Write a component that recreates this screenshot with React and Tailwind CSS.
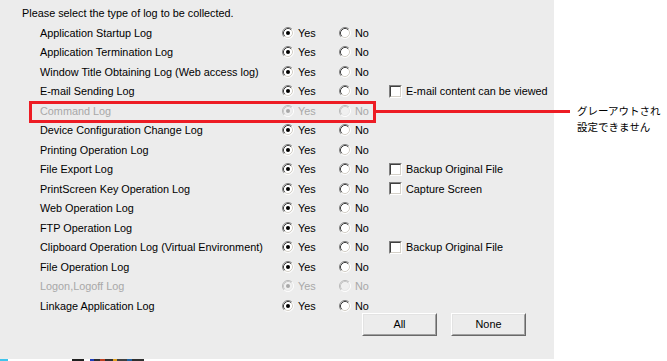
import React from "react";

const rows = [
  { label: "Application Startup Log" },
  { label: "Application Termination Log" },
  { label: "Window Title Obtaining Log (Web access log)" },
  { label: "E-mail Sending Log", extra: "E-mail content can be viewed" },
  { label: "Command Log", disabled: true },
  { label: "Device Configuration Change Log" },
  { label: "Printing Operation Log" },
  { label: "File Export Log", extra: "Backup Original File" },
  { label: "PrintScreen Key Operation Log", extra: "Capture Screen" },
  { label: "Web Operation Log" },
  { label: "FTP Operation Log" },
  { label: "Clipboard Operation Log (Virtual Environment)", extra: "Backup Original File" },
  { label: "File Operation Log" },
  { label: "Logon,Logoff Log", disabled: true },
  { label: "Linkage Application Log" },
];

function Radio({ checked, disabled }) {
  const o1 = disabled ? "#b8b8b8" : "#808080";
  const i1 = disabled ? "#c8c8c8" : "#404040";
  const o2 = "#ffffff";
  const i2 = disabled ? "#e8e8e8" : "#d4d0c8";
  const fill = disabled ? "#f0f0f0" : "#ffffff";
  const dot = disabled ? "#a8a8a8" : "#000000";
  return (
    <svg width="12" height="12" viewBox="0 0 12 12" className="shrink-0">
      <circle cx="6" cy="6" r="5" fill={fill} />
      <path d="M 2.11 9.89 A 5.5 5.5 0 0 1 9.89 2.11" stroke={o1} strokeWidth="1" fill="none" />
      <path d="M 9.89 2.11 A 5.5 5.5 0 0 1 2.11 9.89" stroke={o2} strokeWidth="1" fill="none" />
      <path d="M 2.82 9.18 A 4.5 4.5 0 0 1 9.18 2.82" stroke={i1} strokeWidth="1" fill="none" />
      <path d="M 9.18 2.82 A 4.5 4.5 0 0 1 2.82 9.18" stroke={i2} strokeWidth="1" fill="none" />
      {checked && <circle cx="6" cy="6" r="2" fill={dot} />}
    </svg>
  );
}

function Checkbox() {
  return (
    <div className="w-[13px] h-[13px] shrink-0 border border-t-[#808080] border-l-[#808080] border-b-white border-r-white">
      <div className="w-full h-full bg-white border border-t-[#404040] border-l-[#404040] border-b-[#d4d0c8] border-r-[#d4d0c8]" />
    </div>
  );
}

function Button({ children }) {
  return (
    <div className="w-[75px] h-[23px] border border-t-white border-l-white border-b-[#696969] border-r-[#696969]">
      <div className="w-full h-full flex items-center justify-center bg-[#ececec] border border-t-[#e3e3e3] border-l-[#e3e3e3] border-b-[#a0a0a0] border-r-[#a0a0a0] text-black">
        {children}
      </div>
    </div>
  );
}

export default function App() {
  return (
    <div
      className="w-[667px] h-[361px] bg-white flex flex-col relative overflow-hidden text-[10.85px] text-black"
      style={{ fontFamily: '"Liberation Sans", Arial, sans-serif' }}
    >
      <div className="flex h-[359px]">
        <div className="w-[554px] h-full bg-[#ececec] pt-[3px] flex flex-col">
          <div className="h-[20px] pl-[22px] flex items-center">
            Please select the type of log to be collected.
          </div>
          <div className="flex flex-col pl-[40px]">
            {rows.map((r, i) => {
              const tc = r.disabled ? "text-[#a8a8a8]" : "text-black";
              return (
                <div key={i} className="h-[19.5px] flex items-center">
                  <div className={`w-[242px] whitespace-nowrap ${tc}`}>{r.label}</div>
                  <div className={`w-[57px] flex items-center gap-[4px] ${tc}`}>
                    <Radio checked disabled={r.disabled} />
                    <span>Yes</span>
                  </div>
                  <div className={`w-[50px] flex items-center gap-[4px] ${tc}`}>
                    <Radio disabled={r.disabled} />
                    <span>No</span>
                  </div>
                  {r.extra && (
                    <div className="flex items-center gap-[4px] whitespace-nowrap">
                      <Checkbox />
                      <span>{r.extra}</span>
                    </div>
                  )}
                </div>
              );
            })}
          </div>
          <div className="flex pl-[362px] gap-[14px] -mt-[3px]">
            <Button>All</Button>
            <Button>None</Button>
          </div>
        </div>
        <div
          className="flex-1 pl-[23px] pt-[103px] text-[10.5px] leading-[16px] text-black whitespace-nowrap"
          style={{ fontFamily: '"Noto Sans CJK JP", sans-serif' }}
        >
          <div>グレーアウトされ</div>
          <div>設定できません</div>
        </div>
      </div>
      <div className="h-[2px] flex">
        <span className="w-[8px] bg-[#3fc4ec]" />
        <span className="w-[64px]" />
        <span className="w-[12px] bg-[#202020]" />
        <span className="w-[6px]" />
        <span className="w-[4px] bg-[#2040c0]" />
        <span className="w-[6px] bg-[#303030]" />
        <span className="w-[5px] bg-[#c04020]" />
        <span className="w-[8px] bg-[#303030]" />
        <span className="w-[4px] bg-[#e0a020]" />
        <span className="w-[10px] bg-[#404040]" />
        <span className="w-[5px] bg-[#2060a0]" />
        <span className="w-[12px] bg-[#303030]" />
      </div>

      {/* annotation overlay */}
      <div className="absolute left-[29px] top-[101px] w-[347px] h-[22px] border-[3px] border-[#ed1c24]" />
      <div className="absolute left-[376px] top-[110px] w-[194px] h-[3px] bg-[#ed1c24]" />
    </div>
  );
}
